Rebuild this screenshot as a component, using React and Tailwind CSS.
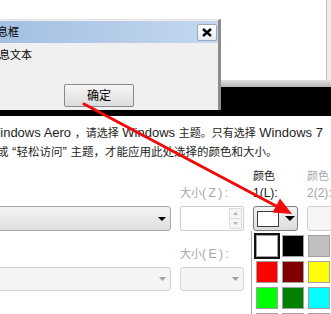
const FONT = "font-['Liberation_Sans','Noto_Sans_CJK_SC',sans-serif]"

const swatches = [
  '#ffffff', '#000000', '#c0c0c0',
  '#ff0000', '#800000', '#ffff00',
  '#00ff00', '#008000', '#00ffff',
  '#0000ff', '#000080', '#ff00ff',
]

// CJK runs are set smaller than the Latin text, as in the screenshot
function Cjk({ children, size = 'text-[11px]' }) {
  return <span className={`${size} font-['Noto_Sans_CJK_SC',sans-serif]`}>{children}</span>
}

function Caret({ color = '#000', w = 8, h = 4 }) {
  return (
    <svg width={w} height={h} viewBox={`0 0 ${w} ${h}`}>
      <polygon points={`0,0 ${w},0 ${w / 2},${h}`} fill={color} />
    </svg>
  )
}

function MessageBox() {
  return (
    <div className="h-[91px] flex flex-col bg-[#f0f0f0] border-t border-[#e2e2e2] border-r-[3px] border-r-[#8c8c8c]">
      {/* title bar */}
      <div className="h-[22px] mt-[1px] flex items-center justify-between bg-gradient-to-r from-[#a4bfe2] to-[#c4d8ef]">
        <span className="ml-[-14px] text-[11px] text-black leading-none">消息框</span>
        <div className="w-[20px] h-[17px] mr-[1px] flex items-center justify-center bg-gradient-to-b from-white to-[#e6ecf4] border border-[#9aa8ba] rounded-[2px]">
          <svg width="10" height="9" viewBox="0 0 10 9">
            <path d="M1 1 L9 8 M9 1 L1 8" stroke="#000" strokeWidth="2.4" />
          </svg>
        </div>
      </div>
      {/* body */}
      <div className="flex-1 flex flex-col">
        <div className="ml-[-12px] mt-[4px] text-[11px] leading-[16px] text-black">消息文本</div>
        <button className="ml-[64px] mt-[21px] w-[70px] h-[23px] flex items-center justify-center text-[12px] text-black bg-gradient-to-b from-[#f6f6f6] to-[#dcdcdc] border border-[#8a8a8a] rounded-[2px]">
          确定
        </button>
      </div>
    </div>
  )
}

export default function App() {
  return (
    <div className={`relative w-[331px] h-[314px] overflow-hidden bg-white ${FONT}`}>
      {/* upper part: desktop window with message box */}
      <div className="flex h-[116px]">
        <div className="w-[221px] flex flex-col">
          <div className="h-[19px] bg-white" />
          <MessageBox />
          <div className="h-[6px] bg-black" />
        </div>
        <div className="flex-1 flex flex-col">
          <div className="h-[80px] bg-white flex justify-end">
            <div className="w-[5px] border-l border-[#bcbcbc] bg-[#ececec]" />
          </div>
          <div className="h-[7px] bg-gradient-to-b from-[#e2e2e2] to-[#b4b4b4]" />
          <div className="flex-1 bg-black" />
        </div>
      </div>

      {/* settings panel */}
      <div className="pt-[7px] text-[13px] leading-[18px] text-[#1e1e1e]">
        <div className="ml-[-12px] whitespace-nowrap">
          Windows Aero <Cjk>，请选择</Cjk> Windows <Cjk>主题。只有选择</Cjk> Windows 7
        </div>
        <div className="ml-[-3px] whitespace-nowrap">
          <Cjk size="text-[11.5px]">或</Cjk> “<Cjk size="text-[11.5px]">轻松访问</Cjk>” <Cjk size="text-[11.5px]">主题，才能应用此处选择的颜色和大小。</Cjk>
        </div>
      </div>

      <div className="mt-[6px] ml-[-10px] grid grid-cols-[181px_64px_45px_45px] gap-x-[9px] text-[12px] leading-[17px]">
        {/* labels */}
        <div />
        <div className="self-end text-[#a6a6a6] whitespace-nowrap"><Cjk>大小</Cjk><span className="tracking-[2.5px]">(Z):</span></div>
        <div className="text-[#1a1a1a] whitespace-nowrap"><Cjk>颜色</Cjk><br />1(L):</div>
        <div className="text-[#a6a6a6] whitespace-nowrap"><Cjk>颜色</Cjk><br />2(2):</div>

        {/* row 1 */}
        <div className="mt-[4px] h-[25px] flex items-center justify-end pr-[4px] bg-gradient-to-b from-[#f4f4f4] to-[#dedede] border border-[#a8a8a8] rounded-[3px]">
          <Caret />
        </div>
        <div className="mt-[4px] h-[25px] flex justify-end bg-white border border-[#cfcfcf] rounded-[2px]">
          <div className="w-[13px] m-[1px] flex flex-col border border-[#dcdcdc] bg-[#f6f6f6]">
            <div className="flex-1 flex items-center justify-center border-b border-[#dcdcdc]">
              <svg width="5" height="3" viewBox="0 0 5 3"><polygon points="0,3 5,3 2.5,0" fill="#b4b4b4" /></svg>
            </div>
            <div className="flex-1 flex items-center justify-center">
              <Caret color="#b4b4b4" w={5} h={3} />
            </div>
          </div>
        </div>
        <div className="mt-[4px] h-[25px] flex items-center pl-[3px] gap-[6px] bg-gradient-to-b from-[#f4f4f4] to-[#dcdcdc] border border-[#7c7c7c] rounded-[3px]">
          <div className="w-[22px] h-[16px] bg-white border border-[#3a3a3a]" />
          <Caret w={10} h={5} />
        </div>
        <div className="mt-[4px] h-[25px] bg-[#f5f5f5] border border-[#cfcfcf] rounded-[3px]" />

        {/* row 2 labels */}
        <div />
        <div className="mt-[14px] text-[#a6a6a6] whitespace-nowrap"><Cjk>大小</Cjk><span className="tracking-[2.5px]">(E):</span></div>
        <div />
        <div />

        {/* row 2 */}
        <div className="mt-[4px] h-[24px] flex items-center justify-end pr-[4px] bg-[#f4f4f4] border border-[#d2d2d2] rounded-[3px]">
          <Caret color="#a0a0a0" w={7} h={4} />
        </div>
        <div className="mt-[4px] h-[24px] flex items-center justify-end pr-[4px] bg-[#f4f4f4] border border-[#d2d2d2] rounded-[3px]">
          <Caret color="#a0a0a0" w={7} h={4} />
        </div>
      </div>

      {/* colour picker popup */}
      <div className="absolute left-[251px] top-[231px] w-[90px] h-[90px] bg-white border-l border-[#a8a8a8] pl-[4px] pt-[4px]">
        <div className="grid grid-cols-[22px_22px_22px] gap-[4px]">
          {swatches.map((c, i) => (
            <div
              key={i}
              className={`w-[22px] h-[22px] border border-[#a0a0a0] ${i === 0 ? 'shadow-[0_0_0_2px_#111]' : ''}`}
              style={{ backgroundColor: c }}
            />
          ))}
        </div>
      </div>

      {/* red annotation arrow */}
      <svg className="absolute inset-0 pointer-events-none" width="331" height="314" viewBox="0 0 331 314">
        <line x1="84" y1="104" x2="278" y2="207" stroke="#f20a0a" strokeWidth="3" strokeLinecap="round" />
        <polygon points="292,214 272.5,212.5 280,198.5" fill="#f20a0a" />
      </svg>
    </div>
  )
}
